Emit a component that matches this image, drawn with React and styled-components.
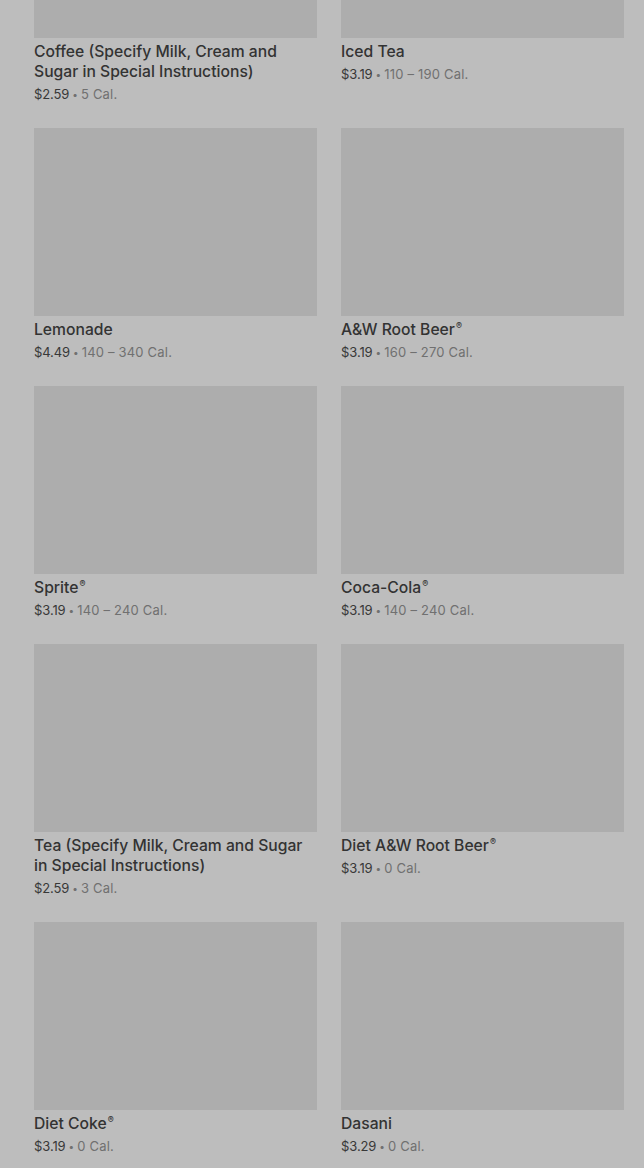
import React from "react";
import styled, { createGlobalStyle } from "styled-components";

const Global = createGlobalStyle`
  html, body { margin: 0; padding: 0; background: #bdbdbd; overflow: hidden; }
  body { font-family: Inter, Roboto, "Noto Sans", sans-serif; }
`;

const Page = styled.div`
  width: 644px;
  height: 1168px;
  overflow: hidden;
  background: #bdbdbd;
`;

const Grid = styled.div`
  display: grid;
  grid-template-columns: 283px 283px;
  column-gap: 24px;
  row-gap: 25px;
  padding-left: 34px;
  margin-top: -150px;
  align-items: start;
`;

const Card = styled.div`
  display: flex;
  flex-direction: column;
`;

const Thumb = styled.div`
  height: 188px;
  background: #adadad;
`;

const Title = styled.div`
  margin-top: 4px;
  font-size: 15.7px;
  line-height: 20px;
  font-weight: 500;
  color: #333333;
`;

const Meta = styled.div`
  margin-top: 3px;
  height: 18px;
  display: flex;
  align-items: center;
  font-size: 13px;
  line-height: 18px;
  color: #707070;
  white-space: nowrap;
`;

const Price = styled.span`
  color: #383838;
  letter-spacing: -0.1px;
`;

const Dot = styled.span`
  margin: 0 3px;
  color: #707070;
  font-size: 10px;
`;

const Cal = styled.span`
  letter-spacing: 0.2px;
`;

const Reg = styled.sup`
  font-size: 9px;
  vertical-align: 6px;
  line-height: 0;
  margin-left: 1px;
`;

const items = [
  { name: "Coffee (Specify Milk, Cream and Sugar in Special Instructions)", price: "$2.59", cal: "5 Cal." },
  { name: "Iced Tea", price: "$3.19", cal: "110 – 190 Cal." },
  { name: "Lemonade", price: "$4.49", cal: "140 – 340 Cal." },
  { name: "A&W Root Beer", reg: true, price: "$3.19", cal: "160 – 270 Cal." },
  { name: "Sprite", reg: true, price: "$3.19", cal: "140 – 240 Cal." },
  { name: "Coca-Cola", reg: true, price: "$3.19", cal: "140 – 240 Cal." },
  { name: "Tea (Specify Milk, Cream and Sugar in Special Instructions)", price: "$2.59", cal: "3 Cal." },
  { name: "Diet A&W Root Beer", reg: true, price: "$3.19", cal: "0 Cal." },
  { name: "Diet Coke", reg: true, price: "$3.19", cal: "0 Cal." },
  { name: "Dasani", price: "$3.29", cal: "0 Cal." },
];

export default function App() {
  return (
    <Page>
      <Global />
      <Grid>
        {items.map((it) => (
          <Card key={it.name}>
            <Thumb />
            <Title>
              {it.name}
              {it.reg && <Reg>®</Reg>}
            </Title>
            <Meta>
              <Price>{it.price}</Price>
              <Dot>•</Dot>
              <Cal>{it.cal}</Cal>
            </Meta>
          </Card>
        ))}
      </Grid>
    </Page>
  );
}
